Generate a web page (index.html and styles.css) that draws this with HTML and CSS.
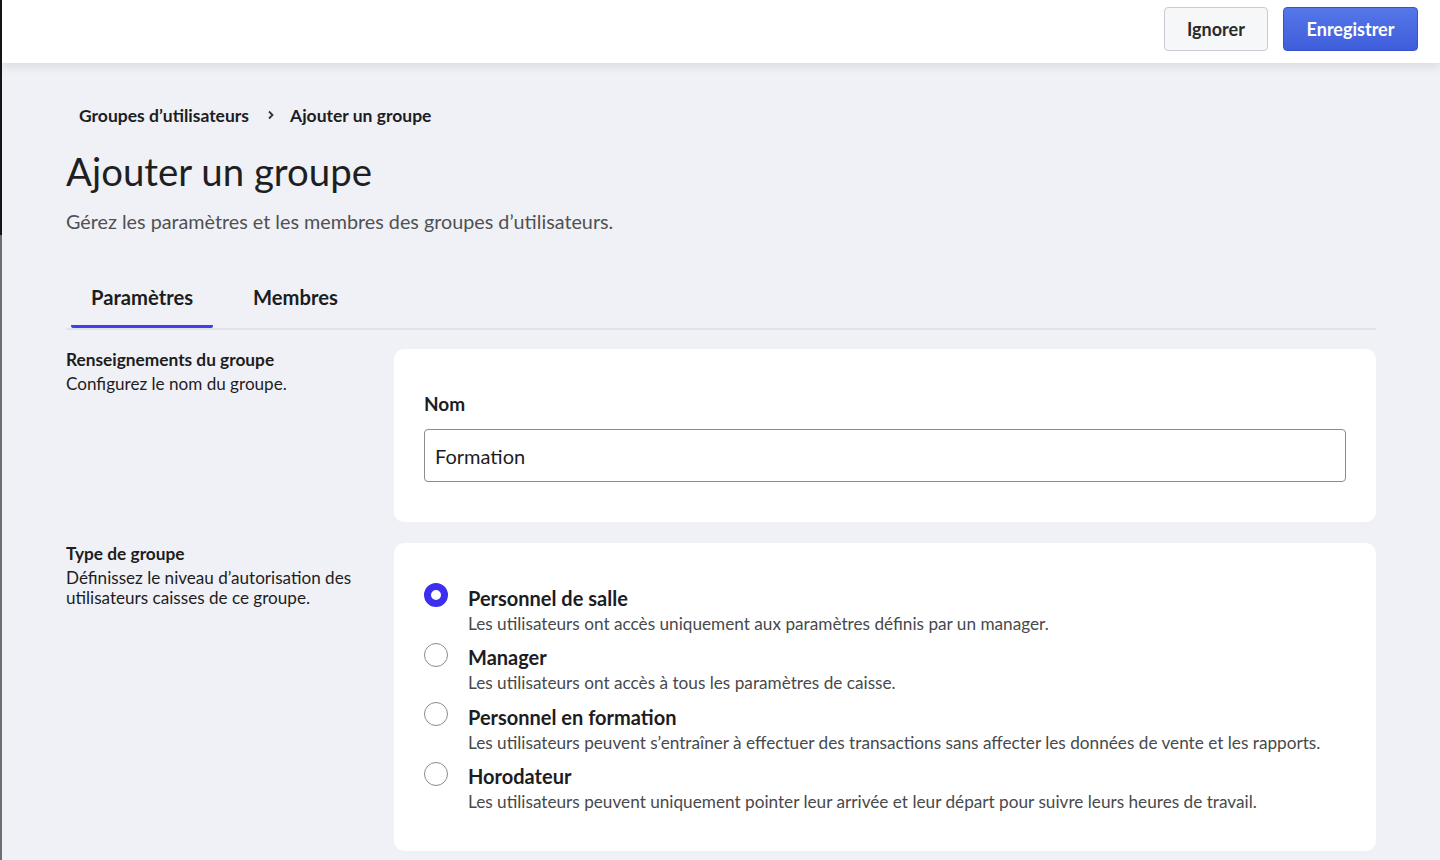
FILE: index.html
```html
<!DOCTYPE html>
<html lang="fr">
<head>
  <meta charset="UTF-8">
  <meta name="viewport" content="width=device-width, initial-scale=1.0">
  <title>Ajouter un groupe</title>
  <link rel="stylesheet" href="styles.css">
</head>
<body>
  <header class="topbar">
    <button class="btn btn-secondary">Ignorer</button>
    <button class="btn btn-primary">Enregistrer</button>
  </header>

  <main class="page">
    <nav class="breadcrumb">
      <a href="#">Groupes d’utilisateurs</a>
      <svg class="crumb-sep" width="8" height="10" viewBox="0 0 8 10"><path d="M2 1.5 L5.5 5 L2 8.5" fill="none" stroke="#333" stroke-width="1.8"/></svg>
      <span>Ajouter un groupe</span>
    </nav>

    <h1 class="title">Ajouter un groupe</h1>
    <p class="subtitle">Gérez les paramètres et les membres des groupes d’utilisateurs.</p>

    <div class="tabs">
      <button class="tab active">Paramètres</button>
      <button class="tab">Membres</button>
    </div>

    <section class="section">
      <div class="section-info">
        <h2>Renseignements du groupe</h2>
        <p>Configurez le nom du groupe.</p>
      </div>
      <div class="card card-name">
        <label class="field-label" for="group-name">Nom</label>
        <input class="text-input" id="group-name" type="text" value="Formation">
      </div>
    </section>

    <section class="section">
      <div class="section-info">
        <h2>Type de groupe</h2>
        <p>Définissez le niveau d’autorisation des utilisateurs caisses de ce groupe.</p>
      </div>
      <div class="card card-type">
        <label class="option">
          <input type="radio" name="type" checked>
          <span class="option-text">
            <strong>Personnel de salle</strong>
            <span>Les utilisateurs ont accès uniquement aux paramètres définis par un manager.</span>
          </span>
        </label>
        <label class="option">
          <input type="radio" name="type">
          <span class="option-text">
            <strong>Manager</strong>
            <span>Les utilisateurs ont accès à tous les paramètres de caisse.</span>
          </span>
        </label>
        <label class="option">
          <input type="radio" name="type">
          <span class="option-text">
            <strong>Personnel en formation</strong>
            <span>Les utilisateurs peuvent s’entraîner à effectuer des transactions sans affecter les données de vente et les rapports.</span>
          </span>
        </label>
        <label class="option">
          <input type="radio" name="type">
          <span class="option-text">
            <strong>Horodateur</strong>
            <span>Les utilisateurs peuvent uniquement pointer leur arrivée et leur départ pour suivre leurs heures de travail.</span>
          </span>
        </label>
      </div>
    </section>
  </main>
</body>
</html>
```

FILE: styles.css
```css
body {
  margin: 0;
  padding-left: 2px;
  background:
    linear-gradient(#151515, #151515) left top / 2px 235px no-repeat,
    linear-gradient(#6e6e6e, #6e6e6e) left top / 2px 100% no-repeat,
    #f0f1f6;
  font-family: Lato, 'Noto Sans', sans-serif;
  color: #1d1d1f;
  height: 860px;
  overflow: hidden;
}
.topbar {
  position: relative;
  z-index: 1;
  height: 63px;
  box-sizing: border-box;
  padding: 7px 22px 0 0;
  display: flex;
  justify-content: flex-end;
  align-items: flex-start;
  gap: 15px;
  background: #fff;
  box-shadow: 0 3px 10px rgba(0, 0, 0, 0.1);
}
.btn {
  height: 44px;
  border-radius: 4px;
  font-family: inherit;
  font-size: 18px;
  font-weight: 700;
  cursor: pointer;
}
.btn-secondary {
  width: 104px;
  background: #f6f7f9;
  border: 1px solid #c8cbd1;
  color: #2b2b2b;
}
.btn-primary {
  width: 135px;
  background: linear-gradient(#5577e8, #3f5ddb);
  border: 1px solid #3753cc;
  color: #fff;
}
.page {
  padding: 0 64px 0 64px;
}
.breadcrumb {
  display: flex;
  align-items: center;
  gap: 16px;
  margin: 40px 0 0 13px;
  height: 24px;
  font-size: 17.5px;
  font-weight: 700;
}
.breadcrumb a {
  color: #1d1d1f;
  text-decoration: none;
}
.crumb-sep {
  margin: 0 -1px 0 2px;
}
.title {
  margin: 20px 0 0;
  font-size: 38.4px;
  font-weight: 400;
  line-height: 48px;
  color: #1f1f21;
}
.subtitle {
  margin: 15px 0 0;
  font-size: 19.75px;
  line-height: 24px;
  color: #4f5053;
}
.tabs {
  display: flex;
  gap: 20px;
  margin-top: 51px;
  padding-left: 5px;
  border-bottom: 2px solid #e2e3e9;
}
.tab {
  padding: 0 20px 16px;
  border: none;
  border-bottom: 3px solid transparent;
  background: none;
  font-family: inherit;
  font-size: 20.2px;
  font-weight: 700;
  line-height: 24px;
  color: #1d1d1f;
  cursor: pointer;
}
.tab.active {
  border-bottom-color: #3f3ff0;
  border-radius: 0 0 2px 2px;
}
.section {
  display: grid;
  grid-template-columns: 300px 1fr;
  gap: 28px;
  margin-top: 19px;
}
.section + .section {
  margin-top: 21px;
}
.section-info h2 {
  margin: 0;
  font-size: 17.3px;
  font-weight: 700;
  line-height: 22px;
}
.section-info p {
  margin: 3px 0 0;
  font-size: 17.1px;
  line-height: 20px;
}
.card {
  background: #fff;
  border-radius: 10px;
}
.card-name {
  padding: 43px 30px 40px;
  display: flex;
  flex-direction: column;
}
.field-label {
  font-size: 19px;
  font-weight: 700;
  line-height: 24px;
  margin-bottom: 13px;
}
.text-input {
  height: 53px;
  box-sizing: border-box;
  border: 1px solid #8c8c8c;
  border-radius: 4px;
  padding: 0 10px;
  font-family: inherit;
  font-size: 20px;
  color: #1d1d1f;
}
.card-type {
  padding: 42.5px 30px 36.5px;
  display: flex;
  flex-direction: column;
  gap: 9.5px;
}
.option {
  display: flex;
  align-items: flex-start;
  gap: 20px;
  cursor: pointer;
}
.option input {
  appearance: none;
  margin: -2.5px 0 0;
  width: 24px;
  height: 24px;
  border: 1.5px solid #8b8b8b;
  border-radius: 50%;
  background: #fff;
  flex-shrink: 0;
}
.option input:checked {
  border: 7.5px solid #3b2ff0;
  background: #fff;
}
.option-text {
  display: flex;
  flex-direction: column;
}
.option-text strong {
  font-size: 20px;
  line-height: 25px;
}
.option-text span {
  font-size: 17.2px;
  line-height: 25px;
  color: #48494c;
}
```
